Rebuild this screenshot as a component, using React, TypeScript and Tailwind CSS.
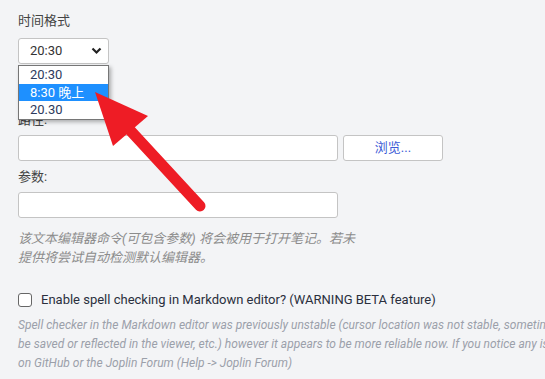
const font = { fontFamily: '"Roboto", "Noto Sans CJK SC", sans-serif' };

function Label({ children }: { children: React.ReactNode }) {
  return <div className="text-[13px] leading-[17px] text-[#444]">{children}</div>;
}

function TimeSelect() {
  return (
    <div className="relative mt-[9px] w-[91px]">
      <div className="flex h-[26px] items-center justify-between rounded-[3px] border border-[#c4c4c4] bg-white pl-[11px] pr-[6px] text-[13px] text-[#333]">
        <span>20:30</span>
        <svg width="11" height="8" viewBox="0 0 11 8">
          <path d="M1.5 1.5 L5.5 5.5 L9.5 1.5" fill="none" stroke="#222" strokeWidth="2.2" />
        </svg>
      </div>
      {/* open dropdown */}
      <div className="absolute left-0 top-[27px] z-10 w-[91px] border border-[#767676] bg-white text-[13px] leading-[17.5px] text-[#2d3a5c] shadow-[2px_2px_4px_rgba(0,0,0,0.3)]">
        <div className="pl-[11px]">20:30</div>
        <div className="bg-[#1e90ff] pl-[11px] text-white">8:30 晚上</div>
        <div className="pl-[11px]">20.30</div>
      </div>
    </div>
  );
}

function TextBox() {
  return <div className="h-[26px] w-[320px] rounded-[3px] border border-[#c4c4c4] bg-white" />;
}

export default function App() {
  return (
    <div className="relative h-[379px] w-full overflow-hidden bg-[#f3f4f6]" style={font}>
      <div className="pl-[18px] pt-[12px]">
        <Label>时间格式</Label>
        <TimeSelect />

        <div className="mt-[47px]">
          <Label>路径:</Label>
        </div>
        <div className="mt-[7px] flex gap-[5px]">
          <TextBox />
          <button className="h-[26px] w-[100px] rounded-[3px] border border-[#c4c4c4] bg-white text-[13px] text-[#3b5bd6]">
            浏览...
          </button>
        </div>

        <div className="mt-[7px]">
          <Label>参数:</Label>
        </div>
        <div className="mt-[7px]">
          <TextBox />
        </div>

        <div className="mt-[12px] text-[13px] italic leading-[18.5px] text-[#8c8c8c]">
          <div>该文本编辑器命令(可包含参数) 将会被用于打开笔记。若未</div>
          <div>提供将尝试自动检测默认编辑器。</div>
        </div>

        <div className="mt-[23px] flex h-[20px] items-center gap-[9px]">
          <div className="h-[14px] w-[14px] rounded-[3px] border border-[#666] bg-white" />
          <span className="text-[13px] leading-[20px] text-[#2a2f3d]">
            Enable spell checking in Markdown editor? (WARNING BETA feature)
          </span>
        </div>

        <div className="mt-[6px] whitespace-nowrap text-[12px] italic leading-[19px] text-[#9ba0aa]">
          <div>Spell checker in the Markdown editor was previously unstable (cursor location was not stable, sometimes edits would not</div>
          <div>be saved or reflected in the viewer, etc.) however it appears to be more reliable now. If you notice any issue, please report it</div>
          <div>on GitHub or the Joplin Forum (Help -&gt; Joplin Forum)</div>
        </div>
      </div>

      {/* red annotation arrow */}
      <svg className="pointer-events-none absolute left-0 top-0 z-20" width="545" height="379">
        <line x1="128" y1="128" x2="200" y2="206" stroke="#ee1c25" strokeWidth="11" strokeLinecap="round" />
        <polygon points="95,92 148,116 113,146" fill="#ee1c25" />
      </svg>
    </div>
  );
}
